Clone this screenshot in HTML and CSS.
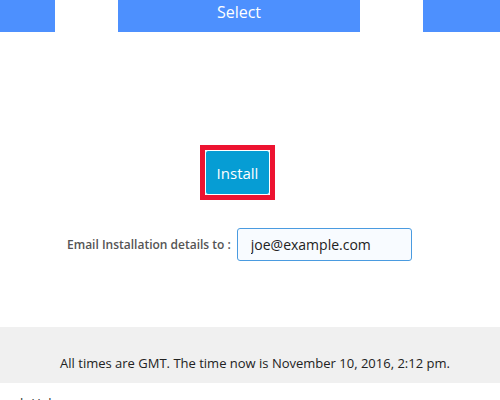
FILE: index.html
```html
<!DOCTYPE html>
<html lang="en">
<head>
    <meta charset="UTF-8">
    <meta name="viewport" content="width=device-width, initial-scale=1.0">
    <title>Install</title>
    <link rel="stylesheet" href="styles.css">
</head>
<body>

    <div class="tabs">
        <div class="tab tab-left"></div>
        <div class="tab tab-main">Select</div>
        <div class="tab tab-right"></div>
    </div>

    <div class="install-area">
        <div class="install-frame">
            <button class="install-btn">Install</button>
        </div>

        <div class="email-row">
            <label for="email" class="email-label">Email Installation details to :</label>
            <input id="email" class="email-input" type="text" value="joe@example.com">
        </div>
    </div>

    <div class="footer">
        All times are GMT. The time now is November 10, 2016, 2:12 pm.
    </div>

    <div class="bottom-links">
        <a href="#">ub</a> <a href="#">Help</a>
    </div>

</body>
</html>
```

FILE: styles.css
```css
body {
    margin: 0;
    font-family: "Open Sans", "Liberation Sans", sans-serif;
    background: white;
    color: #222;
}
.tabs {
    display: flex;
    gap: 63px;
    height: 32px;
}
.tab {
    background: #4d90fe;
    height: 32px;
}
.tab-left {
    width: 55px;
}
.tab-main {
    width: 242px;
    color: white;
    font-size: 16px;
    line-height: 24px;
    text-align: center;
}
.tab-right {
    flex: 1;
}
.install-area {
    padding-top: 113px;
}
.install-frame {
    width: 65px;
    margin-left: 200px;
    border: 5px solid #ed1330;
    padding: 0;
}
.install-btn {
    display: block;
    width: 65px;
    height: 45px;
    border: 1px solid white;
    border-radius: 3px;
    background: #069dd4;
    color: white;
    font-family: "Open Sans", "Liberation Sans", sans-serif;
    font-size: 15px;
    cursor: pointer;
}
.email-row {
    display: flex;
    align-items: center;
    gap: 6px;
    margin-top: 28px;
    padding-left: 67px;
}
.email-label {
    font-size: 12px;
    font-weight: 600;
    color: #555;
}
.email-input {
    width: 160px;
    height: 31px;
    border: 1px solid #4a9be0;
    border-radius: 3px;
    background: #f8fbff;
    padding: 0 0 0 13px;
    font-family: "Open Sans", "Liberation Sans", sans-serif;
    font-size: 14px;
    color: #222;
}
.footer {
    margin-top: 66px;
    height: 56px;
    box-sizing: border-box;
    padding: 27px 0 0 10px;
    background: #f0f0f0;
    text-align: center;
    font-size: 13px;
    line-height: 18px;
}
.bottom-links {
    padding: 11px 0 0 12px;
    font-size: 13px;
}
.bottom-links a {
    color: #333;
    text-decoration: none;
}
```
